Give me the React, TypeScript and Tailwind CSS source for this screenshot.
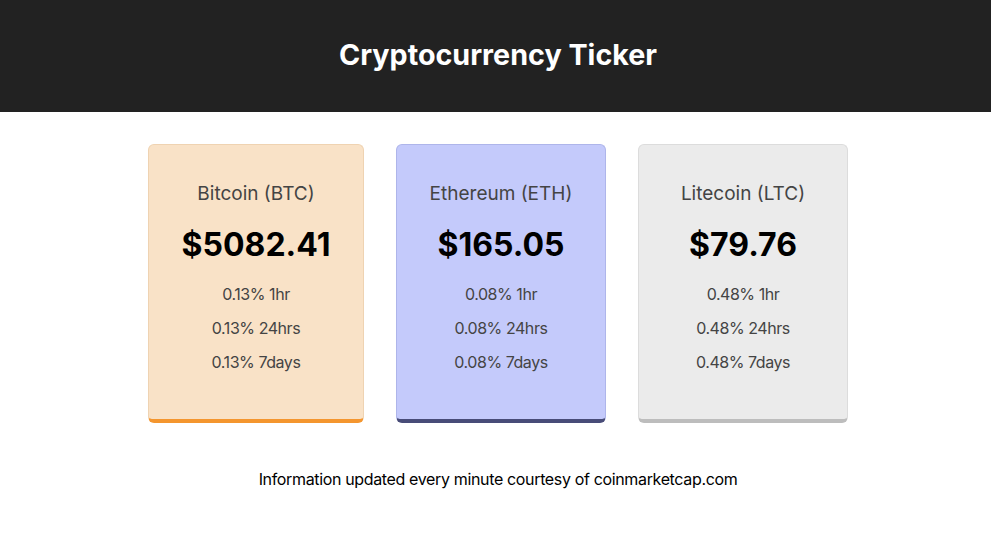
const coins = [
  {
    name: "Bitcoin (BTC)",
    price: "$5082.41",
    change: "0.13%",
    card: "w-[216px] bg-[#f9e2c7] border-[#efd3b2] border-b-[#f4962f]",
  },
  {
    name: "Ethereum (ETH)",
    price: "$165.05",
    change: "0.08%",
    card: "w-[210px] bg-[#c4cafb] border-[#aeb5ea] border-b-[#484c78]",
  },
  {
    name: "Litecoin (LTC)",
    price: "$79.76",
    change: "0.48%",
    card: "w-[210px] bg-[#ebebeb] border-[#dcdcdc] border-b-[#bdbdbd]",
  },
];

function Card({ coin }: { coin: (typeof coins)[number] }) {
  return (
    <div className={`${coin.card} rounded-md border border-b-4 pt-[35px] pb-[45px] flex flex-col items-center text-center`}>
      <h2 className="text-[19px] leading-7 text-[#444]">{coin.name}</h2>
      <p className="mt-[17px] text-[32px] leading-10 font-bold text-black">{coin.price}</p>
      <ul className="mt-[17px] flex flex-col gap-[10px] text-[16px] leading-6 tracking-[-0.45px] text-[#444]">
        <li>{coin.change} 1hr</li>
        <li>{coin.change} 24hrs</li>
        <li>{coin.change} 7days</li>
      </ul>
    </div>
  );
}

export default function App() {
  return (
    <div className="min-h-screen bg-white font-['Inter',sans-serif]">
      <header className="h-[112px] bg-[#222222] flex items-center justify-center pl-[5px]">
        <h1 className="text-[28.7px] font-bold text-white -mt-[2px]">Cryptocurrency Ticker</h1>
      </header>
      <main className="mt-8 flex justify-center gap-8 pl-[5px]">
        {coins.map((c) => (
          <Card key={c.name} coin={c} />
        ))}
      </main>
      <p className="mt-[44px] pl-[5px] text-center text-[16px] leading-6 tracking-[-0.35px] text-black">
        Information updated every minute courtesy of coinmarketcap.com
      </p>
    </div>
  );
}
